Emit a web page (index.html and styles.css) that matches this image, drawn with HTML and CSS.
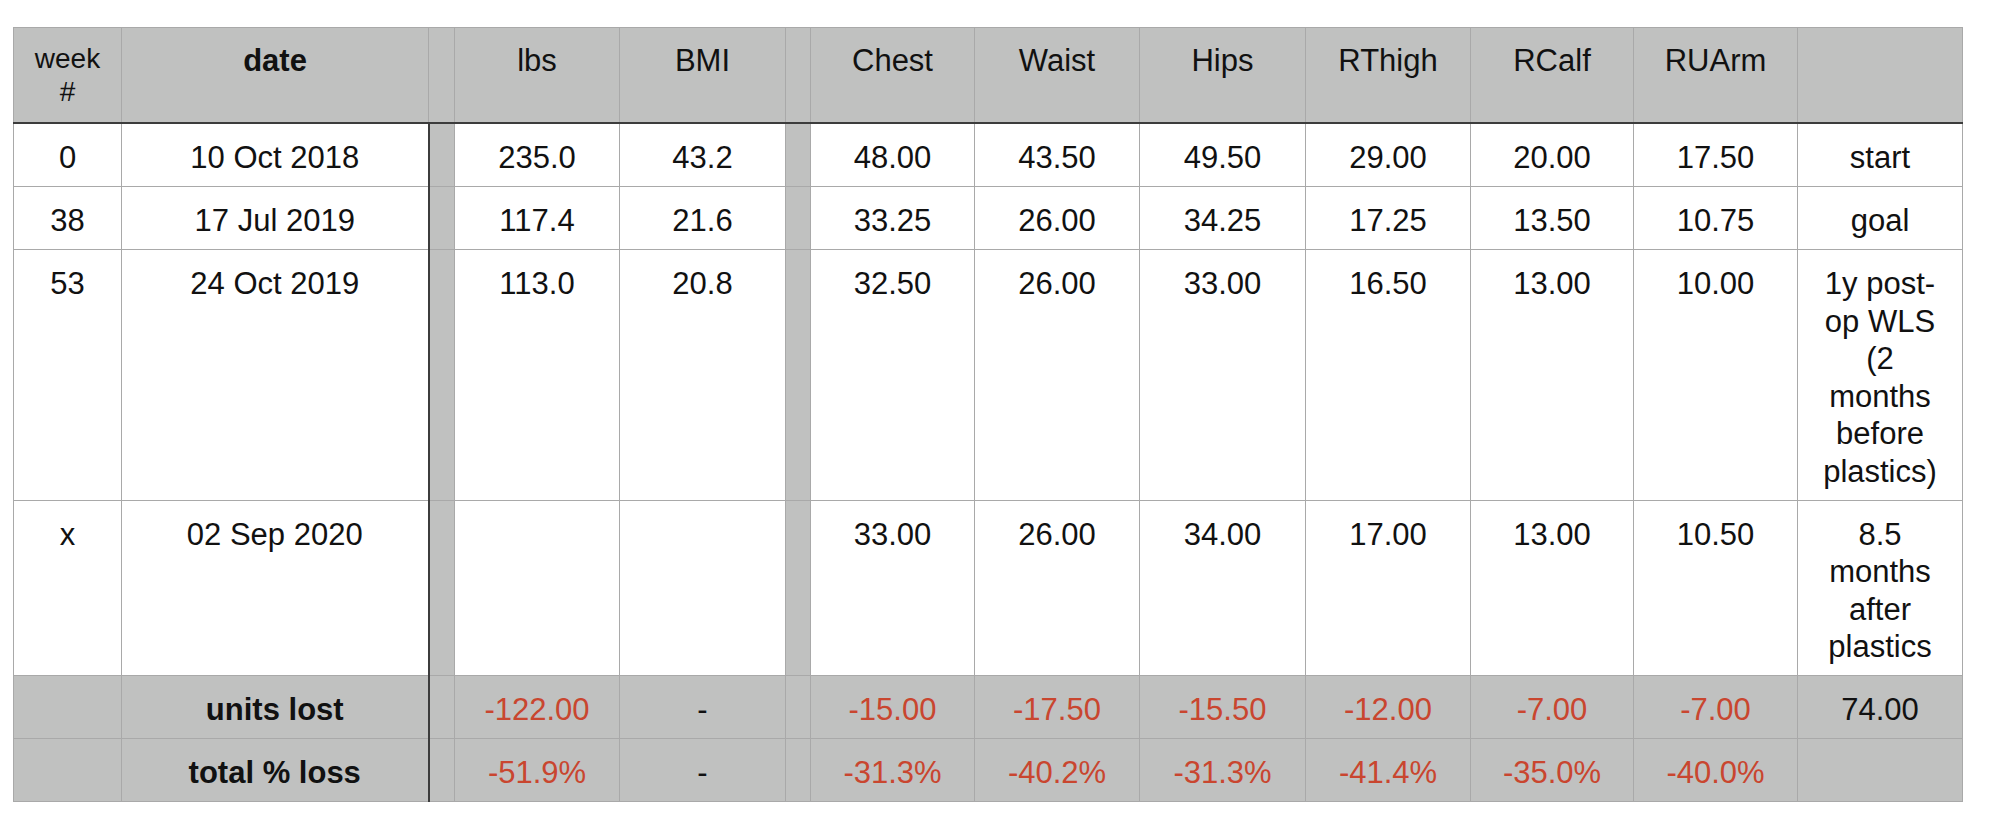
FILE: index.html
```html
<!DOCTYPE html>
<html lang="en">
<head>
<meta charset="utf-8">
<title>Measurements</title>
<link rel="stylesheet" href="styles.css">
</head>
<body>
<table class="sheet">
  <colgroup>
    <col class="c-week">
    <col class="c-date">
    <col class="c-sp1">
    <col class="c-lbs">
    <col class="c-bmi">
    <col class="c-sp2">
    <col class="c-chest">
    <col class="c-waist">
    <col class="c-hips">
    <col class="c-thigh">
    <col class="c-calf">
    <col class="c-arm">
    <col class="c-note">
  </colgroup>
  <thead>
    <tr class="head">
      <th class="week-h">week<br>#</th>
      <th class="bold">date</th>
      <th class="sp"></th>
      <th>lbs</th>
      <th>BMI</th>
      <th class="sp"></th>
      <th>Chest</th>
      <th>Waist</th>
      <th>Hips</th>
      <th>RThigh</th>
      <th>RCalf</th>
      <th>RUArm</th>
      <th></th>
    </tr>
  </thead>
  <tbody>
    <tr>
      <td>0</td><td>10 Oct 2018</td><td class="sp sp1"></td>
      <td>235.0</td><td>43.2</td><td class="sp"></td>
      <td>48.00</td><td>43.50</td><td>49.50</td><td>29.00</td><td>20.00</td><td>17.50</td>
      <td class="note">start</td>
    </tr>
    <tr>
      <td>38</td><td>17 Jul 2019</td><td class="sp sp1"></td>
      <td>117.4</td><td>21.6</td><td class="sp"></td>
      <td>33.25</td><td>26.00</td><td>34.25</td><td>17.25</td><td>13.50</td><td>10.75</td>
      <td class="note">goal</td>
    </tr>
    <tr>
      <td>53</td><td>24 Oct 2019</td><td class="sp sp1"></td>
      <td>113.0</td><td>20.8</td><td class="sp"></td>
      <td>32.50</td><td>26.00</td><td>33.00</td><td>16.50</td><td>13.00</td><td>10.00</td>
      <td class="note">1y post-op WLS (2 months before plastics)</td>
    </tr>
    <tr>
      <td>x</td><td>02 Sep 2020</td><td class="sp sp1"></td>
      <td></td><td></td><td class="sp"></td>
      <td>33.00</td><td>26.00</td><td>34.00</td><td>17.00</td><td>13.00</td><td>10.50</td>
      <td class="note">8.5 months after plastics</td>
    </tr>
  </tbody>
  <tfoot>
    <tr class="foot">
      <td></td><td class="bold">units lost</td><td class="sp sp1"></td>
      <td class="neg">-122.00</td><td>-</td><td class="sp"></td>
      <td class="neg">-15.00</td><td class="neg">-17.50</td><td class="neg">-15.50</td><td class="neg">-12.00</td><td class="neg">-7.00</td><td class="neg">-7.00</td>
      <td class="note">74.00</td>
    </tr>
    <tr class="foot">
      <td></td><td class="bold">total % loss</td><td class="sp sp1"></td>
      <td class="neg">-51.9%</td><td>-</td><td class="sp"></td>
      <td class="neg">-31.3%</td><td class="neg">-40.2%</td><td class="neg">-31.3%</td><td class="neg">-41.4%</td><td class="neg">-35.0%</td><td class="neg">-40.0%</td>
      <td class="note"></td>
    </tr>
  </tfoot>
</table>
</body>
</html>
```
FILE: styles.css
```css
html, body {
  margin: 0;
  padding: 0;
  background: #ffffff;
}

body {
  padding: 27px 0 0 13px;
  font-family: "Liberation Sans", Arial, Helvetica, sans-serif;
  color: #111111;
}

.sheet {
  border-collapse: collapse;
  table-layout: fixed;
  width: 1950px;
  font-size: 31px;
  line-height: 37.5px;
}

.c-week { width: 108px; }
.c-date { width: 307px; }
.c-sp1 { width: 26px; }
.c-lbs { width: 165px; }
.c-bmi { width: 166px; }
.c-sp2 { width: 25px; }
.c-chest { width: 164px; }
.c-waist { width: 165px; }
.c-hips { width: 166px; }
.c-thigh { width: 165px; }
.c-calf { width: 163px; }
.c-arm { width: 164px; }
.c-note { width: 165px; }

.sheet th,
.sheet td {
  border: 1px solid #a9a9a9;
  text-align: center;
  vertical-align: top;
  padding: 15px 0 9.5px 0;
  font-weight: normal;
}

.sheet .head th {
  background: #c0c1c0;
  height: 70px;
  padding-top: 14px;
  padding-bottom: 10px;
  border-bottom: 2px solid #3c3c3c;
}

.sheet .head th.week-h {
  font-size: 28px;
  line-height: 33px;
}

.sheet .bold {
  font-weight: bold;
}

.sheet .sp {
  background: #c0c1c0;
}

.sheet td.sp1 {
  border-left: 2px solid #3c3c3c;
}

.sheet .note {
  padding-left: 20px;
  padding-right: 20px;
}

.sheet .foot td {
  background: #c0c1c0;
}

.sheet .neg {
  color: #c9462f;
}
```
